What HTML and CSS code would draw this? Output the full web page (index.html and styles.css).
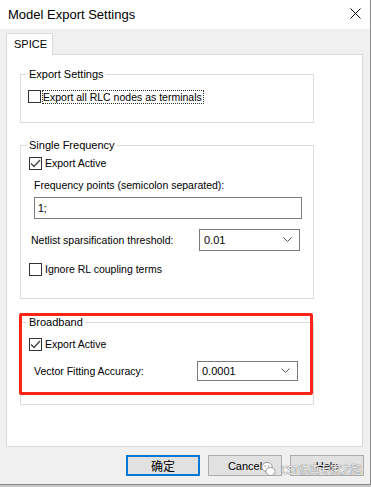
FILE: index.html
```html
<!DOCTYPE html>
<html lang="en">
<head>
    <meta charset="UTF-8">
    <title>Model Export Settings</title>
    <link rel="stylesheet" href="styles.css">
</head>
<body>
    <div class="window">
        <div class="titlebar">
            <span class="title">Model Export Settings</span>
            <svg class="close" width="11" height="11" viewBox="0 0 11 11">
                <path d="M0.5 0.5 L10.5 10.5 M10.5 0.5 L0.5 10.5" stroke="#000" stroke-width="1" fill="none"/>
            </svg>
        </div>
        <div class="client">
            <div class="tabs">
                <div class="tab">SPICE</div>
            </div>
            <div class="panel">
                <fieldset class="group g-export">
                    <legend>Export Settings</legend>
                    <div class="group-body">
                        <label class="check">
                            <span class="box"></span>
                            <span class="focus">Export all RLC nodes as terminals</span>
                        </label>
                    </div>
                </fieldset>

                <fieldset class="group g-single">
                    <legend>Single Frequency</legend>
                    <div class="group-body">
                        <label class="check">
                            <span class="box checked">
                                <svg width="11" height="11" viewBox="0 0 11 11"><path d="M1 5.5 L4 8.5 L10 2" stroke="#444" stroke-width="1.3" fill="none"/></svg>
                            </span>
                            <span>Export Active</span>
                        </label>
                        <div class="field-label">Frequency points (semicolon separated):</div>
                        <div class="textbox">1;</div>
                        <div class="row netlist">
                            <span class="row-label">Netlist sparsification threshold:</span>
                            <div class="combo">
                                <span>0.01</span>
                                <svg width="9" height="6" viewBox="0 0 9 6"><path d="M0.5 0.5 L4.5 4.5 L8.5 0.5" stroke="#555" stroke-width="1" fill="none"/></svg>
                            </div>
                        </div>
                        <label class="check ignore">
                            <span class="box"></span>
                            <span>Ignore RL coupling terms</span>
                        </label>
                    </div>
                </fieldset>

                <div class="marked">
                    <fieldset class="group g-broad">
                        <legend>Broadband</legend>
                        <div class="group-body">
                            <label class="check">
                                <span class="box checked">
                                    <svg width="11" height="11" viewBox="0 0 11 11"><path d="M1 5.5 L4 8.5 L10 2" stroke="#444" stroke-width="1.3" fill="none"/></svg>
                                </span>
                                <span>Export Active</span>
                            </label>
                            <div class="row vector">
                                <span class="row-label">Vector Fitting Accuracy:</span>
                                <div class="combo">
                                    <span>0.0001</span>
                                    <svg width="9" height="6" viewBox="0 0 9 6"><path d="M0.5 0.5 L4.5 4.5 L8.5 0.5" stroke="#555" stroke-width="1" fill="none"/></svg>
                                </div>
                            </div>
                        </div>
                    </fieldset>
                    <div class="mark"></div>
                </div>
            </div>
            <div class="buttons">
                <button class="btn default">确定</button>
                <button class="btn">Cancel</button>
                <button class="btn">Help</button>
            </div>
        </div>
        <div class="watermark">
            <svg width="15" height="16" viewBox="0 0 15 16">
                <ellipse cx="6" cy="6" rx="5.2" ry="4.6" fill="#fff" stroke="#999" stroke-width="1"/>
                <ellipse cx="9.5" cy="10.5" rx="4.6" ry="4" fill="#fff" stroke="#999" stroke-width="1"/>
                <circle cx="4.2" cy="5" r="0.8" fill="#999"/>
                <circle cx="7.6" cy="5" r="0.8" fill="#999"/>
            </svg>
            <span>CST仿真专家之路</span>
        </div>
    </div>
</body>
</html>
```

FILE: styles.css
```css
*{
    margin: 0;
    padding: 0;
    box-sizing: border-box;
}
body{
    width: 371px;
    height: 487px;
    background: #c8c8c8;
    font-family: "Liberation Sans", "Noto Sans CJK SC", sans-serif;
    font-size: 10.5px;
    color: #000;
    overflow: hidden;
}
.window{
    position: relative;
    width: 371px;
    height: 485px;
    background: #f0f0f0;
    border-right: 1px solid #8a8a8a;
    border-bottom: 1px solid #8a8a8a;
}
.titlebar{
    height: 29px;
    background: #fff;
    display: flex;
    align-items: center;
    justify-content: space-between;
    padding: 0 9px 1px 8px;
}
.title{
    font-size: 13px;
    line-height: 29px;
}
.close{
    display: block;
    margin-bottom: 1px;
}
.client{
    padding: 4px 0 0 6px;
}
.tabs{
    display: flex;
    height: 21px;
}
.tab{
    position: relative;
    z-index: 1;
    width: 47px;
    height: 22px;
    background: #fff;
    border: 1px solid #d9d9d9;
    border-bottom: none;
    padding-left: 7px;
    line-height: 20px;
    font-size: 11px;
}
.panel{
    width: 357px;
    height: 393px;
    background: #fff;
    border: 1px solid #d9d9d9;
    padding: 0 13px;
}
.group{
    width: 294px;
    border: 1px solid #dcdcdc;
    min-inline-size: 0;
    padding: 0;
}
.group legend{
    margin-left: 6px;
    padding: 0 2px;
    line-height: 12px;
    font-size: 11px;
}
.g-export{
    margin-top: 13px;
}
.g-export .group-body{
    padding: 10px 7px 19px;
}
.g-single{
    margin-top: 16px;
}
.g-single .group-body{
    padding: 6px 8px 22px;
}
.marked{
    position: relative;
    margin-top: 17px;
}
.g-broad .group-body{
    padding: 10px 8px 23px;
}
.check{
    display: flex;
    align-items: center;
    height: 13px;
    line-height: 13px;
}
.box{
    width: 13px;
    height: 13px;
    border: 1px solid #333;
    background: #fff;
    margin-right: 3px;
    flex: none;
    display: flex;
    align-items: center;
    justify-content: center;
}
.box svg{
    display: block;
}
.focus{
    outline: 1px dotted #333;
    outline-offset: 0;
    padding: 0 1px 0 0;
    line-height: 12px;
    margin-left: -1px;
}
.field-label{
    margin: 9px 0 0 5px;
    line-height: 13px;
}
.textbox{
    margin: 5px 0 0 5px;
    width: 268px;
    height: 22px;
    border: 1px solid #7a7a7a;
    padding-left: 3px;
    line-height: 20px;
}
.row{
    display: flex;
    align-items: center;
}
.netlist{
    margin-top: 10px;
    padding-left: 2px;
}
.netlist .row-label{
    width: 168px;
}
.ignore{
    margin-top: 12px;
}
.vector{
    margin-top: 10px;
    padding-left: 5px;
}
.vector .row-label{
    width: 163px;
}
.combo{
    width: 101px;
    height: 22px;
    border: 1px solid #7a7a7a;
    background: #fff;
    display: flex;
    align-items: center;
    justify-content: space-between;
    padding: 0 7px 0 4px;
    font-size: 11px;
}
.vector .combo{
    height: 20px;
}
.mark{
    position: absolute;
    top: -3px;
    left: -1px;
    width: 294px;
    height: 82px;
    border: 3px solid #ff2418;
    border-radius: 2px;
}
.buttons{
    display: flex;
    justify-content: flex-end;
    gap: 8px;
    width: 358px;
    margin-top: 8px;
}
.btn{
    width: 74px;
    height: 21px;
    background: #e1e1e1;
    border: 1px solid #adadad;
    font-family: "Liberation Sans", "Noto Sans CJK SC", sans-serif;
    font-size: 11px;
    color: #000;
}
.btn.default{
    border: 2px solid #0078d7;
    font-size: 12px;
}
.watermark{
    position: absolute;
    left: 261px;
    top: 461px;
    display: flex;
    align-items: center;
    gap: 5px;
    font-family: "Noto Sans CJK SC", sans-serif;
    font-size: 11px;
    letter-spacing: -0.6px;
    color: rgba(255, 255, 255, 0.9);
    text-shadow: 0 0 1px #777, 0 0 1px #777;
}
```
